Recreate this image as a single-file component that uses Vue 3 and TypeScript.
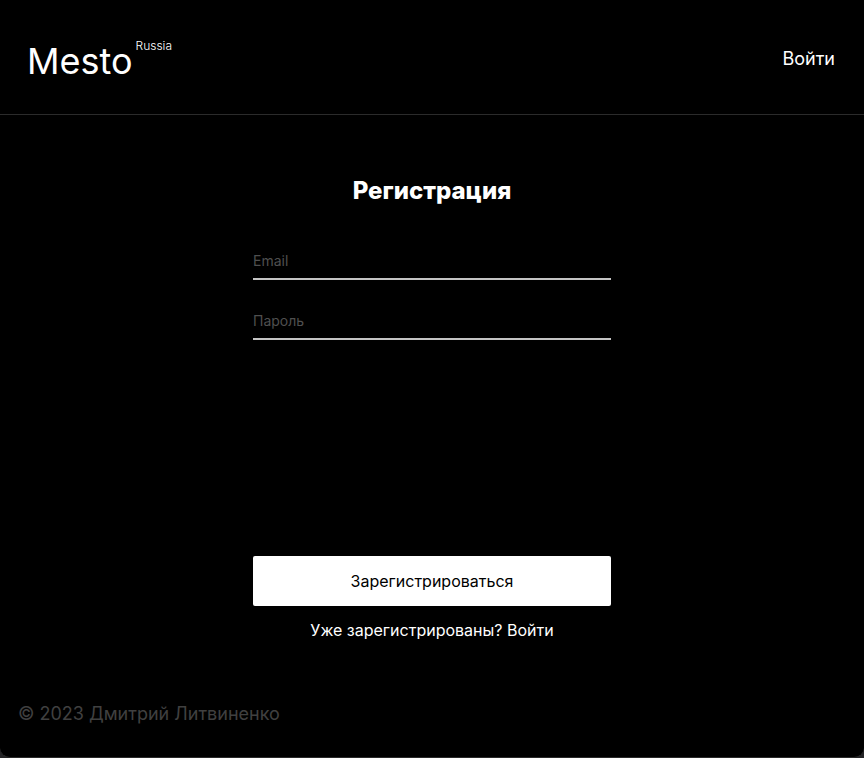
<script setup lang="ts">
import { ref } from 'vue'

const email = ref<string>('')
const password = ref<string>('')
</script>

<template>
  <div class="page">
    <header class="header">
      <a class="logo" href="#" aria-label="Mesto Russia">
        <span class="logo-name">Mesto</span><span class="logo-region">Russia</span>
      </a>
      <a class="header-link" href="#">Войти</a>
    </header>
    <main class="main">
      <form class="form" @submit.prevent>
        <h1 class="title">Регистрация</h1>
        <input v-model="email" class="field" type="email" placeholder="Email" aria-label="Email" />
        <input v-model="password" class="field" type="password" placeholder="Пароль" aria-label="Пароль" />
        <button class="submit" type="submit">Зарегистрироваться</button>
        <p class="hint">Уже зарегистрированы? <a class="hint-link" href="#">Войти</a></p>
      </form>
    </main>
    <footer class="footer">© 2023 Дмитрий Литвиненко</footer>
  </div>
</template>

<style>
body {
  background: #242426;
}
</style>

<style scoped>
.page {
  box-sizing: border-box;
  display: flex;
  flex-direction: column;
  min-height: 100vh;
  background: #000;
  border-bottom: 1px solid #2b2b2b;
  border-radius: 0 0 10px 10px;
  color: #fff;
  font-family: Inter, "Liberation Sans", sans-serif;
}
.header {
  display: flex;
  align-items: center;
  justify-content: space-between;
  padding: 39px 29px 31px 27px;
  border-bottom: 1px solid #2b2b2b;
}
.logo {
  display: flex;
  align-items: flex-start;
  gap: 3px;
  color: #fff;
  text-decoration: none;
}
.logo-name {
  font-size: 36px;
  line-height: 44px;
}
.logo-region {
  font-size: 12px;
  font-weight: 300;
  line-height: 14px;
}
.header-link {
  padding-bottom: 4px;
  color: #fff;
  font-size: 18px;
  line-height: 22px;
  text-decoration: none;
}
.main {
  flex: 1;
  padding: 61px 20px 0;
}
.form {
  display: flex;
  flex-direction: column;
  max-width: 358px;
  margin: 0 auto;
}
.title {
  margin: 0 0 38px;
  font-size: 24px;
  font-weight: 800;
  line-height: 30px;
  text-align: center;
}
.field {
  box-sizing: border-box;
  width: 100%;
  height: 36px;
  margin: 0 0 24px;
  padding: 0 0 1px;
  border: 0;
  border-bottom: 2px solid #c4c4c4;
  border-radius: 0;
  outline: none;
  background: transparent;
  color: #fff;
  font-family: inherit;
  font-size: 14px;
}
.field::placeholder {
  color: #4f4f4f;
  opacity: 1;
}
.submit {
  height: 50px;
  margin-top: 192px;
  border: 0;
  border-radius: 2px;
  background: #fff;
  color: #000;
  font-family: inherit;
  font-size: 16px;
}
.hint {
  margin: 14px 0 0;
  font-size: 16px;
  line-height: 20px;
  text-align: center;
}
.hint-link {
  color: #fff;
  text-decoration: none;
}
.footer {
  padding: 0 18px 32px;
  color: #404040;
  font-size: 18px;
  line-height: 22px;
}
</style>
